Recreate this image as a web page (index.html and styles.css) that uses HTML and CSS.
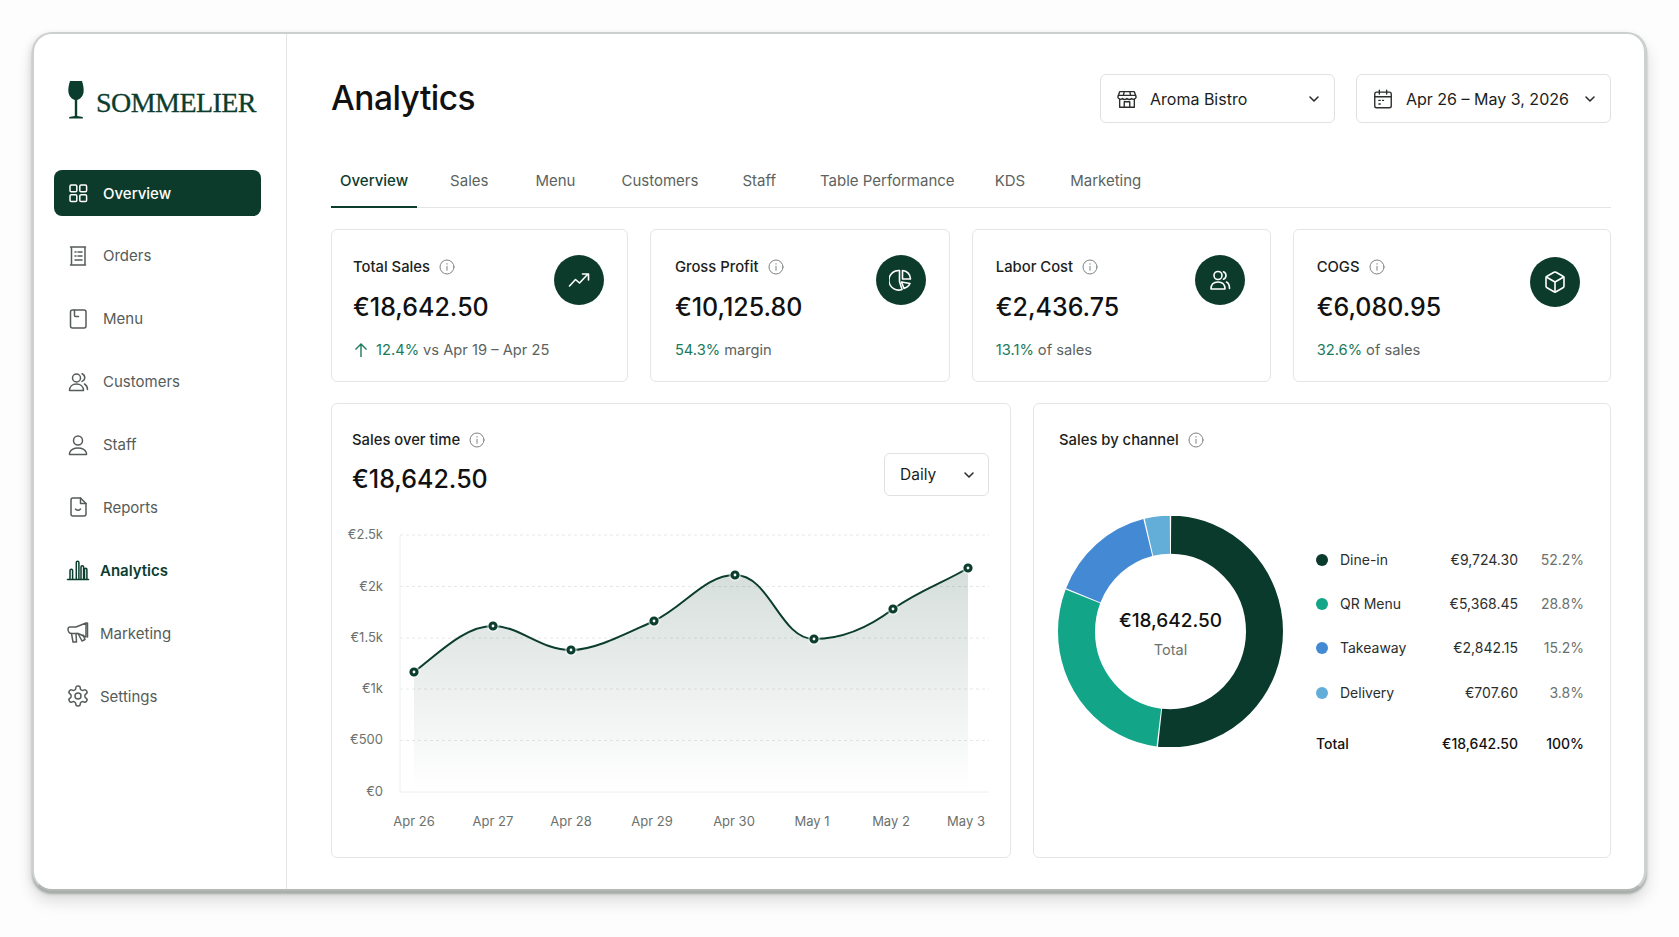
FILE: index.html
```html
<!DOCTYPE html>
<html lang="en">
<head>
    <meta charset="UTF-8">
    <title>Sommelier - Analytics</title>
    <link rel="stylesheet" href="styles.css">
</head>
<body>
    <svg class="defs" width="0" height="0">
        <symbol id="info" viewBox="0 0 16 16"><circle cx="8" cy="8" r="7"/><path d="M8 7.300v4M8 4.600v.6"/></symbol>
        <symbol id="chevron" viewBox="0 0 12 12"><path d="M2 4l4 4 4-4"/></symbol>
    </svg>
    <div class="frame">
        <aside class="sidebar">
            <div class="brand">
                <svg class="brand-glass" viewBox="0 0 16 38"><path d="M2 0h12c1.300 4 2 8 1.600 11-.6 4.500-3.400 7.200-6.400 7.900V35c2 .2 4 .5 5.600 1.100v1.400H1.200v-1.400C2.800 35.500 4.800 35.200 6.800 35V18.900C3.800 18.200 1 15.500.4 11 0 8 .7 4 2 0z"/></svg>
                <span class="brand-name">SOMMELIER</span>
            </div>
            <nav class="nav">
                <a class="nav-item active">
                    <svg viewBox="0 0 24 24"><rect x="4" y="4" width="6.800" height="6.800" rx="1.300"/><rect x="13.800" y="4" width="6.800" height="6.800" rx="1.300"/><rect x="4" y="13.800" width="6.800" height="6.800" rx="1.300"/><rect x="13.800" y="13.800" width="6.800" height="6.800" rx="1.300"/></svg>
                    Overview
                </a>
                <a class="nav-item">
                    <svg viewBox="0 0 24 24"><path d="M5.500 3h13.500v18H5.500zM4.500 3h15M4.500 21h15"/><path d="M9 8h1M12 8h4M9 12h1M12 12h4M9 16h7"/></svg>
                    Orders
                </a>
                <a class="nav-item">
                    <svg viewBox="0 0 24 24"><rect x="4.500" y="3" width="15.500" height="18" rx="2"/><path d="M8.500 3v5.500c0 .6.400 1 1 1h3"/></svg>
                    Menu
                </a>
                <a class="nav-item">
                    <svg viewBox="0 0 24 24"><circle cx="10.500" cy="8" r="4"/><path d="M3.500 20.500c0-4 3-6.500 7-6.500s7 2.500 7 6.500z"/><path d="M16 3.800a4 4 0 0 1 0 7.600M18.500 14c1.700 1 3 3.200 3 5.500"/></svg>
                    Customers
                </a>
                <a class="nav-item">
                    <svg viewBox="0 0 24 24"><circle cx="12" cy="7.500" r="4.500"/><path d="M3.500 21.500c0-.8 0-1.500.3-2.200C5 16.500 8 15 12 15s7 1.500 8.200 4.300c.3.700.3 1.400.3 2.200z"/></svg>
                    Staff
                </a>
                <a class="nav-item">
                    <svg viewBox="0 0 24 24"><path d="M7 3h7.500L20 8.500V19a2 2 0 0 1-2 2H7a2 2 0 0 1-2-2V5a2 2 0 0 1 2-2z"/><path d="M14.500 3v5.500H20M9.500 14c1.500 1.500 3.500 1.500 5 0"/></svg>
                    Reports
                </a>
                <a class="nav-item current tight">
                    <svg viewBox="0 0 24 24"><path d="M1.500 21.500h21M4 21v-8.500a1.300 1.300 0 0 1 2.600 0V21M10.300 21V4.500a1.300 1.300 0 0 1 2.600 0V21M15 21V9a1.300 1.300 0 0 1 2.600 0V21M18.500 21v-9.500a1.200 1.200 0 0 1 2.400 0V21"/></svg>
                    Analytics
                </a>
                <a class="nav-item tight">
                    <svg viewBox="0 0 24 24"><path d="M2 8c0-1.100.9-2 2-2h6l10-4v14l-8-3.500H5.500C3.500 12.500 2 10.500 2 8z"/><path d="M20 2.500 21.500 2v14M5.500 12.500 7 21h3.500l-.5-8.500M12 12.500 16 20l3-1.500-2-4.500"/></svg>
                    Marketing
                </a>
                <a class="nav-item tight">
                    <svg viewBox="0 0 24 24"><path d="M12.220 2h-.44a2 2 0 0 0-2 2v.18a2 2 0 0 1-1 1.730l-.43.25a2 2 0 0 1-2 0l-.15-.08a2 2 0 0 0-2.730.73l-.22.38a2 2 0 0 0 .73 2.730l.15.1a2 2 0 0 1 1 1.720v.51a2 2 0 0 1-1 1.740l-.15.09a2 2 0 0 0-.73 2.730l.22.38a2 2 0 0 0 2.730.73l.15-.08a2 2 0 0 1 2 0l.43.25a2 2 0 0 1 1 1.730V20a2 2 0 0 0 2 2h.44a2 2 0 0 0 2-2v-.18a2 2 0 0 1 1-1.730l.43-.25a2 2 0 0 1 2 0l.15.08a2 2 0 0 0 2.730-.73l.22-.39a2 2 0 0 0-.73-2.730l-.15-.08a2 2 0 0 1-1-1.740v-.5a2 2 0 0 1 1-1.740l.15-.09a2 2 0 0 0 .73-2.730l-.22-.38a2 2 0 0 0-2.730-.73l-.15.08a2 2 0 0 1-2 0l-.43-.25a2 2 0 0 1-1-1.730V4a2 2 0 0 0-2-2z"/><circle cx="12" cy="12" r="3"/></svg>
                    Settings
                </a>
            </nav>
        </aside>

        <main class="main">
            <header class="page-header">
                <h1>Analytics</h1>
                <div class="select select-store">
                    <svg class="select-icon" viewBox="0 0 24 24"><path d="M4 4h16l2 6a3 3 0 0 1-5 1.500 3.500 3.500 0 0 1-5 0 3.500 3.500 0 0 1-5 0A3 3 0 0 1 2 10z"/><path d="M4 12v9h16v-9M9 21v-6h6v6M2.500 8h19M9 4 8 8M15 4l1 4"/></svg>
                    <span>Aroma Bistro</span>
                    <svg class="chevron"><use href="#chevron"/></svg>
                </div>
                <div class="select select-date">
                    <svg class="select-icon" viewBox="0 0 24 24"><rect x="3" y="4.500" width="18" height="17" rx="2"/><path d="M3 9.500h18M8 2.500v4M16 2.500v4M7.500 13.500h1.500M11.500 13.500h1M7.500 17.500h1.500"/></svg>
                    <span>Apr 26 – May 3, 2026</span>
                    <svg class="chevron"><use href="#chevron"/></svg>
                </div>
            </header>

            <div class="tabs">
                <a class="tab active">Overview</a>
                <a class="tab">Sales</a>
                <a class="tab">Menu</a>
                <a class="tab">Customers</a>
                <a class="tab">Staff</a>
                <a class="tab">Table Performance</a>
                <a class="tab">KDS</a>
                <a class="tab">Marketing</a>
            </div>

            <section class="kpis">
                <div class="kpi">
                    <div class="kpi-text">
                        <div class="card-title">Total Sales <svg class="info"><use href="#info"/></svg></div>
                        <div class="kpi-value">€18,642.50</div>
                        <div class="kpi-sub">
                            <svg class="up-arrow" viewBox="0 0 16 16"><path d="M8 15V2M2.500 7.500 8 2l5.500 5.500"/></svg>
                            <b>12.4%</b> vs Apr 19 – Apr 25
                        </div>
                    </div>
                    <div class="kpi-icon">
                        <svg viewBox="0 0 24 24"><path d="M2.500 18l6-6.500 4 3.500L20.500 6.500M15.500 6h6v6"/></svg>
                    </div>
                </div>
                <div class="kpi">
                    <div class="kpi-text">
                        <div class="card-title">Gross Profit <svg class="info"><use href="#info"/></svg></div>
                        <div class="kpi-value">€10,125.80</div>
                        <div class="kpi-sub"><b>54.3%</b> margin</div>
                    </div>
                    <div class="kpi-icon">
                        <svg viewBox="0 0 24 24"><path d="M10.500 2.500a9.800 9.800 0 1 0 2.500 19l-2.500-8z"/><path d="M13.500 2.500a8.500 8.500 0 0 1 8 8.500h-8zM12.500 14l8.500 1.500a9.500 9.500 0 0 1-6 5z"/></svg>
                    </div>
                </div>
                <div class="kpi">
                    <div class="kpi-text">
                        <div class="card-title">Labor Cost <svg class="info"><use href="#info"/></svg></div>
                        <div class="kpi-value">€2,436.75</div>
                        <div class="kpi-sub"><b>13.1%</b> of sales</div>
                    </div>
                    <div class="kpi-icon">
                        <svg viewBox="0 0 24 24"><circle cx="10" cy="7.500" r="4"/><path d="M3 21c0-4.500 2.500-7 7-7s7 2.500 7 7z"/><path d="M15.500 3.800a4 4 0 0 1 0 7.400M18.500 14c2 1 3 3.500 3 6.500"/></svg>
                    </div>
                </div>
                <div class="kpi">
                    <div class="kpi-text">
                        <div class="card-title">COGS <svg class="info"><use href="#info"/></svg></div>
                        <div class="kpi-value">€6,080.95</div>
                        <div class="kpi-sub"><b>32.6%</b> of sales</div>
                    </div>
                    <div class="kpi-icon">
                        <svg viewBox="0 0 24 24"><path d="M21 8a2 2 0 0 0-1-1.730l-7-4a2 2 0 0 0-2 0l-7 4A2 2 0 0 0 3 8v8a2 2 0 0 0 1 1.730l7 4a2 2 0 0 0 2 0l7-4A2 2 0 0 0 21 16Z"/><path d="M3.300 7 12 12l8.700-5M12 22V12"/></svg>
                    </div>
                </div>
            </section>

            <section class="panels">
                <div class="panel panel-sales">
                    <div class="panel-head">
                        <div>
                            <div class="card-title">Sales over time <svg class="info"><use href="#info"/></svg></div>
                            <div class="kpi-value">€18,642.50</div>
                        </div>
                        <div class="select select-range">
                            <span>Daily</span>
                            <svg class="chevron"><use href="#chevron"/></svg>
                        </div>
                    </div>
                    <svg class="line-chart" viewBox="352 520 640 320" width="640" height="320">
                        <defs>
                            <linearGradient id="areaFill" x1="0" y1="0" x2="0" y2="1">
                                <stop offset="0" stop-color="#0b3d2e" stop-opacity="0.17"/>
                                <stop offset="1" stop-color="#0b3d2e" stop-opacity="0"/>
                            </linearGradient>
                        </defs>
                        <g class="grid">
                            <path d="M400 535H989M400 586.500H989M400 638H989M400 689H989M400 740.500H989"/>
                        </g>
                        <path class="axis" d="M400 535V792H989"/>
                        <path fill="url(#areaFill)" d="M414 672C440 652 465 626 493 626C520 626 540 650 571 650C595 650 625 634 654 621C685 606 705 575 735 575C770 575 780 639 814 639C840 639 868 628 893 609C920 590 945 582 968 568V790H414Z"/>
                        <path class="line" d="M414 672C440 652 465 626 493 626C520 626 540 650 571 650C595 650 625 634 654 621C685 606 705 575 735 575C770 575 780 639 814 639C840 639 868 628 893 609C920 590 945 582 968 568"/>
                        <g class="dots">
                            <circle cx="414" cy="672" r="3"/>
                            <circle cx="493" cy="626" r="3"/>
                            <circle cx="571" cy="650" r="3"/>
                            <circle cx="654" cy="621" r="3"/>
                            <circle cx="735" cy="575" r="3"/>
                            <circle cx="814" cy="639" r="3"/>
                            <circle cx="893" cy="609" r="3"/>
                            <circle cx="968" cy="568" r="3"/>
                        </g>
                        <g class="y-labels">
                            <text x="383" y="539">€2.5k</text>
                            <text x="383" y="591">€2k</text>
                            <text x="383" y="642">€1.5k</text>
                            <text x="383" y="693">€1k</text>
                            <text x="383" y="744">€500</text>
                            <text x="383" y="796">€0</text>
                        </g>
                        <g class="x-labels">
                            <text x="414" y="826">Apr 26</text>
                            <text x="493" y="826">Apr 27</text>
                            <text x="571" y="826">Apr 28</text>
                            <text x="652" y="826">Apr 29</text>
                            <text x="734" y="826">Apr 30</text>
                            <text x="812" y="826">May 1</text>
                            <text x="891" y="826">May 2</text>
                            <text x="966" y="826">May 3</text>
                        </g>
                    </svg>
                </div>

                <div class="panel panel-channel">
                    <div class="card-title">Sales by channel <svg class="info"><use href="#info"/></svg></div>
                    <div class="channel-body">
                        <div class="donut">
                            <svg viewBox="0 0 225 231" preserveAspectRatio="none">
                                <g transform="translate(112.500 115.500) scale(1 1.030) rotate(-90)" fill="none" stroke-width="37">
                                    <circle r="94" pathLength="100" stroke="#0a3a2b" stroke-dasharray="51.700 48.300" stroke-dashoffset="-0.1"/>
                                    <circle r="94" pathLength="100" stroke="#12a587" stroke-dasharray="28.900 71.100" stroke-dashoffset="-52"/>
                                    <circle r="94" pathLength="100" stroke="#4389d3" stroke-dasharray="15 85" stroke-dashoffset="-81.100"/>
                                    <circle r="94" pathLength="100" stroke="#63aed8" stroke-dasharray="3.600 96.400" stroke-dashoffset="-96.300"/>
                                </g>
                            </svg>
                            <div class="donut-center">
                                <div class="donut-total">€18,642.50</div>
                                <div class="donut-label">Total</div>
                            </div>
                        </div>
                        <table class="legend">
                            <tr>
                                <td class="legend-name"><i class="dot dot-dine"></i>Dine-in</td>
                                <td class="legend-amount">€9,724.30</td>
                                <td class="legend-pct">52.2%</td>
                            </tr>
                            <tr>
                                <td class="legend-name"><i class="dot dot-qr"></i>QR Menu</td>
                                <td class="legend-amount">€5,368.45</td>
                                <td class="legend-pct">28.8%</td>
                            </tr>
                            <tr>
                                <td class="legend-name"><i class="dot dot-take"></i>Takeaway</td>
                                <td class="legend-amount">€2,842.15</td>
                                <td class="legend-pct">15.2%</td>
                            </tr>
                            <tr>
                                <td class="legend-name"><i class="dot dot-delivery"></i>Delivery</td>
                                <td class="legend-amount">€707.60</td>
                                <td class="legend-pct">3.8%</td>
                            </tr>
                            <tr class="legend-total">
                                <td>Total</td>
                                <td class="legend-amount">€18,642.50</td>
                                <td class="legend-pct">100%</td>
                            </tr>
                        </table>
                    </div>
                </div>
            </section>
        </main>
    </div>
</body>
</html>
```

FILE: styles.css
```css
html, body {
    margin: 0;
    padding: 0;
    height: 100%;
    overflow: hidden;
}
body {
    font-family: Inter, 'Noto Sans', sans-serif;
    background: #fdfdfd;
    color: #111;
    padding: 32px 0 0 32px;
    box-sizing: border-box;
}

.defs {
    position: absolute;
}

.frame {
    display: flex;
    width: 1615px;
    height: 859px;
    box-sizing: border-box;
    background: #fff;
    border: 2px solid #ccd0ce;
    border-bottom-color: #b4b9b6;
    border-right-width: 3px;
    border-radius: 20px;
    box-shadow: 0 3px 2px #a9aeab, 0 10px 16px rgba(0, 0, 0, 0.14), -2px 2px 6px rgba(0, 0, 0, 0.08);
}

/* sidebar */
.sidebar {
    width: 253px;
    flex-shrink: 0;
    box-sizing: border-box;
    border-right: 1px solid #e4e6e5;
    padding: 47px 25px 0 20px;
}

.brand {
    display: flex;
    align-items: flex-end;
    gap: 12px;
    margin-left: 14px;
    height: 38px;
}
.brand-glass {
    width: 16px;
    height: 38px;
    fill: #0b3d2e;
}
.brand-name {
    font-family: 'Liberation Serif', serif;
    font-size: 28px;
    line-height: 32px;
    color: #0b3d2e;
    letter-spacing: -0.55px;
    -webkit-text-stroke: 0.3px #0b3d2e;
}

.nav {
    display: flex;
    flex-direction: column;
    gap: 16.900px;
    margin-top: 51px;
}
.nav-item {
    display: flex;
    align-items: center;
    gap: 13px;
    height: 46px;
    padding-left: 12px;
    border-radius: 8px;
    font-size: 15px;
    color: #555c59;
}
.nav-item svg {
    width: 24px;
    height: 24px;
    fill: none;
    stroke: currentColor;
    stroke-width: 1.500;
    stroke-linecap: round;
    stroke-linejoin: round;
    flex-shrink: 0;
}
.nav-item.tight {
    gap: 10px;
}
.nav-item.active {
    background: #0c3b2c;
    color: #fff;
    font-weight: 500;
}
.nav-item.current {
    color: #0b3d2e;
    font-weight: 600;
}

/* main */
.main {
    flex: 1;
    min-width: 0;
    padding: 40px 33px 0 44px;
}

.page-header {
    display: flex;
    align-items: center;
    height: 49px;
}
.page-header h1 {
    flex: 1;
    margin: 0 0 2px;
    font-size: 33.500px;
    font-weight: 500;
    letter-spacing: -0.5px;
    color: #111;
}

.select {
    display: flex;
    align-items: center;
    box-sizing: border-box;
    height: 49px;
    border: 1px solid #dfe2e1;
    border-radius: 6px;
    background: #fff;
    font-size: 16px;
    color: #1b1d1c;
}
.select span {
    flex: 1;
}
.select-icon {
    width: 22px;
    height: 22px;
    margin-right: 12px;
    fill: none;
    stroke: #2b2e2d;
    stroke-width: 1.500;
    stroke-linecap: round;
    stroke-linejoin: round;
}
.chevron {
    width: 12px;
    height: 12px;
    fill: none;
    stroke: #2b2e2d;
    stroke-width: 1.600;
    stroke-linecap: round;
    stroke-linejoin: round;
}
.select-store {
    width: 235px;
    padding: 0 14px 0 15px;
    margin-right: 21px;
}
.select-date {
    width: 255px;
    padding: 0 14px 0 15px;
}
.select-range {
    width: 105px;
    height: 43px;
    padding: 0 13px 0 15px;
    margin-top: 23px;
    font-size: 15.500px;
}

.tabs {
    display: flex;
    gap: 26px;
    margin-top: 43px;
    border-bottom: 1px solid #e4e6e5;
}
.tab {
    padding: 0 9px 10px;
    line-height: 30px;
    font-size: 15px;
    color: #5c6360;
    margin-bottom: -1px;
    border-bottom: 2px solid transparent;
}
.tab.active {
    color: #0b3d2e;
    font-weight: 500;
    border-bottom-color: #0b3d2e;
}
/* the labels are not evenly spaced */
.tab:nth-child(2) { margin-left: -2px; }
.tab:nth-child(3) { margin-left: 3px; }
.tab:nth-child(4) { margin-left: 2px; }
.tab:nth-child(7) { margin-left: -4px; }
.tab:nth-child(8) { margin-left: 1px; }

.kpis {
    display: grid;
    grid-template-columns: 297fr 300fr 299fr 318fr;
    gap: 21.600px;
    margin-top: 21px;
}
.kpi {
    display: flex;
    justify-content: space-between;
    align-items: flex-start;
    height: 153px;
    box-sizing: border-box;
    padding: 27px 23px 0 21px;
    border: 1px solid #e4e6e5;
    border-radius: 6px;
    background: #fff;
}
.kpi:nth-child(2) {
    padding-left: 24px;
}
.kpi:nth-child(3) {
    padding-left: 23px;
    padding-right: 25px;
}
.kpi:nth-child(4) {
    padding-left: 23px;
    padding-right: 30px;
}

.card-title {
    display: flex;
    align-items: center;
    gap: 9px;
    height: 20px;
    font-size: 14.800px;
    font-weight: 500;
    color: #1c1e1d;
}
.info {
    width: 16px;
    height: 16px;
    fill: none;
    stroke: #7d8380;
    stroke-width: 1;
    stroke-linecap: round;
}
.kpi-value {
    font-size: 25px;
    font-weight: 500;
    line-height: 34px;
    margin-top: 13px;
    color: #111;
}
.kpi-sub {
    display: flex;
    align-items: center;
    gap: 4px;
    margin-top: 16px;
    font-size: 14.700px;
    line-height: 20px;
    color: #5c6360;
}
.kpi-sub b {
    font-weight: 400;
    color: #1a7a5c;
}
.up-arrow {
    width: 16px;
    height: 16px;
    margin-right: 3px;
    fill: none;
    stroke: #1a7a5c;
    stroke-width: 1.400;
}
.kpi-icon {
    display: flex;
    align-items: center;
    justify-content: center;
    width: 50px;
    height: 50px;
    margin-top: -2px;
    border-radius: 50%;
    background: #0c3b2c;
    flex-shrink: 0;
}
.kpi:nth-child(4) .kpi-icon {
    margin-top: 0;
}
.kpi-icon svg {
    width: 24px;
    height: 24px;
    fill: none;
    stroke: #fff;
    stroke-width: 1.600;
    stroke-linecap: round;
    stroke-linejoin: round;
}

.panels {
    display: grid;
    grid-template-columns: 680px 577.500px;
    gap: 22px;
    margin-top: 21px;
}
.panel {
    height: 455px;
    box-sizing: border-box;
    border: 1px solid #e4e6e5;
    border-radius: 6px;
    background: #fff;
    padding: 26px 21px 0 20px;
}
.panel-channel {
    padding-left: 25px;
}
.panel-head {
    display: flex;
    justify-content: space-between;
    height: 90px;
}
.panel-head .kpi-value {
    margin-top: 12px;
}

.line-chart {
    display: block;
    overflow: visible;
    font-size: 13px;
    fill: #6b716e;
}
.grid path {
    fill: none;
    stroke: #e6e8e7;
    stroke-width: 1;
    stroke-dasharray: 3 3;
}
.axis {
    fill: none;
    stroke: #eceeed;
}
.line {
    fill: none;
    stroke: #0b3d2e;
    stroke-width: 2;
}
.dots circle {
    fill: #fff;
    stroke: #0b3d2e;
    stroke-width: 3.200;
    filter: drop-shadow(0 0 1px #fff) drop-shadow(0 0 1px #fff);
}
.y-labels text {
    text-anchor: end;
}
.x-labels text {
    text-anchor: middle;
}

.channel-body {
    display: flex;
    align-items: flex-start;
    margin-top: 66px;
    margin-left: -1px;
}
.donut {
    position: relative;
    width: 225px;
    height: 231px;
    flex-shrink: 0;
}
.donut svg {
    display: block;
    width: 100%;
    height: 100%;
}
.donut-center {
    position: absolute;
    inset: 0;
    display: flex;
    flex-direction: column;
    align-items: center;
    justify-content: center;
    padding-top: 4px;
    box-sizing: border-box;
}
.donut-total {
    font-size: 19px;
    font-weight: 500;
    line-height: 26px;
    color: #111;
}
.donut-label {
    font-size: 14.500px;
    line-height: 20px;
    margin-top: 6px;
    color: #6b716e;
}

.legend {
    border-collapse: collapse;
    table-layout: fixed;
    width: 268px;
    margin: 21px 0 0 33px;
    font-size: 14px;
    color: #2b2e2d;
}
.legend td {
    height: 44.300px;
    padding: 0;
    white-space: nowrap;
}
.legend-name {
    width: 122px;
}
.dot {
    display: inline-block;
    width: 12px;
    height: 12px;
    margin-right: 12px;
    border-radius: 50%;
    vertical-align: -1px;
}
.dot-dine { background: #0a3a2b; }
.dot-qr { background: #12a587; }
.dot-take { background: #4389d3; }
.dot-delivery { background: #63aed8; }
.legend-amount {
    width: 80px;
    text-align: right;
}
.legend-pct {
    width: 66px;
    text-align: right;
    color: #6b716e;
}
.legend-total td {
    height: 58px;
    font-weight: 500;
    color: #111;
}
```
